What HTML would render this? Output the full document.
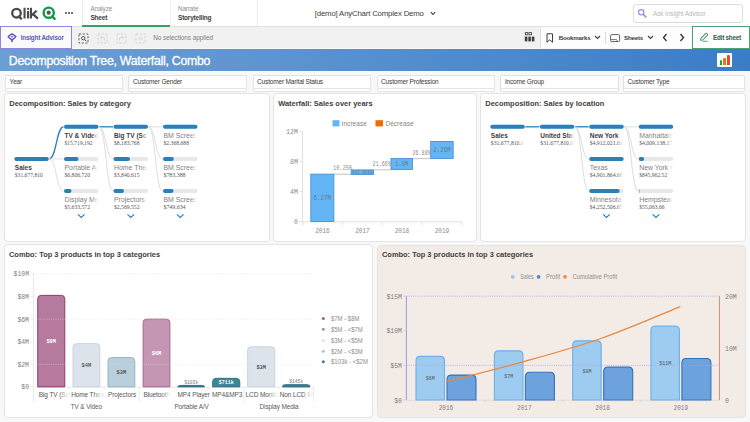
<!DOCTYPE html>
<html><head><meta charset="utf-8">
<style>
*{box-sizing:border-box;margin:0;padding:0}
html,body{width:750px;height:422px;overflow:hidden;background:#f8f8f8;font-family:"Liberation Sans",sans-serif;color:#333}
.a{position:absolute}
#top{left:0;top:0;width:750px;height:27px;background:#fff;border-bottom:1px solid #e0e0e0}
#tool{left:0;top:27px;width:750px;height:22px;background:#f1f1f1;border-bottom:1px solid #f8f8f8}
#title{left:0;top:49px;width:750px;height:22.4px;background:linear-gradient(90deg,#6b9ed5 0%,#5f95d1 33%,#3a7dc7 100%)}
.filt{top:74.5px;height:17px;background:#fff;border:1px solid #e2e2e2;border-radius:2px;font-size:6.5px;line-height:8px;color:#383838;padding:2.8px 0 0 3.6px;letter-spacing:-0.17px}.filt::after{content:"";position:absolute;left:0;right:0;top:12.5px;height:1px;background:#e6e6e6}
.panel{background:#fff;border:1px solid #e4e4e4;border-radius:4px}
.ptitle{font-size:7.45px;font-weight:bold;color:#404040;left:4px;top:5px;line-height:9px;white-space:nowrap}
</style></head><body>
<div id="top" class="a">
 <svg class="a" style="left:0;top:0" width="60" height="26" viewBox="0 0 60 26">
 <circle cx="16.5" cy="13.2" r="4.3" fill="none" stroke="#4a4a4a" stroke-width="2.3"/>
 <path d="M18.8 16.4 L21.2 18.6" stroke="#4a4a4a" stroke-width="2.2" stroke-linecap="round"/>
 <rect x="23.5" y="7.8" width="2.1" height="10.8" rx="0.3" fill="#4a4a4a"/>
 <circle cx="28.05" cy="8.9" r="1.15" fill="#4a4a4a"/>
 <rect x="27" y="11" width="2.1" height="7.6" rx="0.3" fill="#4a4a4a"/>
 <rect x="29.9" y="7.8" width="2.1" height="10.8" rx="0.3" fill="#4a4a4a"/>
 <path d="M31.6 15.3 L36.6 10.8 M33 14.1 L37.9 18.6" stroke="#4a4a4a" stroke-width="2.2"/>
 <circle cx="48.7" cy="12.7" r="5.1" fill="none" stroke="#0f9a48" stroke-width="2.4"/>
 <circle cx="48.7" cy="12.7" r="2.1" fill="#555"/>
 <path d="M52.2 16.3 L54.6 18.8" stroke="#0f9a48" stroke-width="2.4" stroke-linecap="round"/>
</svg>
 <div class="a" style="left:65px;top:12px;width:2px;height:2px;background:#404040;border-radius:1px"></div>
 <div class="a" style="left:68px;top:12px;width:2px;height:2px;background:#404040;border-radius:1px"></div>
 <div class="a" style="left:71px;top:12px;width:2px;height:2px;background:#404040;border-radius:1px"></div>
 <div class="a" style="left:82px;top:0;width:1px;height:26px;background:#ececec"></div>
 <div class="a" style="left:90.4px;top:4.5px;font-size:6.3px;color:#8c8c8c;line-height:8px;letter-spacing:-0.1px">Analyze</div>
 <div class="a" style="left:90.4px;top:13.6px;font-size:6.5px;font-weight:bold;color:#404040;line-height:8px;letter-spacing:-0.2px">Sheet</div>
 <div class="a" style="left:82px;top:25px;width:88px;height:2px;background:#3aa061"></div>
 <div class="a" style="left:178px;top:4.5px;font-size:6.3px;color:#8c8c8c;line-height:8px;letter-spacing:-0.1px">Narrate</div>
 <div class="a" style="left:178px;top:13.6px;font-size:6.5px;font-weight:bold;color:#404040;line-height:8px;letter-spacing:-0.2px">Storytelling</div>
 <div class="a" style="left:257px;top:0;width:1px;height:26px;background:#ececec"></div>
 <div class="a" style="left:169.5px;top:0;width:1px;height:25px;background:#f1f1f1"></div>
 <div class="a" style="left:314.8px;top:9px;font-size:7.8px;color:#404040;line-height:9px;letter-spacing:-0.18px">[demo] AnyChart Complex Demo</div>
 <svg class="a" style="left:430px;top:11px" width="6" height="5" viewBox="0 0 6 5"><path d="M0.8 1.2 L3 3.4 L5.2 1.2" fill="none" stroke="#404040" stroke-width="1.1"/></svg>
 <div class="a" style="left:633px;top:4px;width:110px;height:19px;border:1px solid #dcdcdc;border-radius:3px;background:#fff"></div>
 <svg class="a" style="left:636px;top:7px" width="12" height="12" viewBox="0 0 12 12"><circle cx="5.2" cy="5.3" r="2.7" fill="none" stroke="#9088dc" stroke-width="1.1"/><path d="M7.2 7.3 L9.8 9.9" stroke="#9088dc" stroke-width="1.5" stroke-linecap="round"/></svg>
 <div class="a" style="left:653px;top:9.6px;font-size:6.4px;color:#b8b8b8;line-height:8px;letter-spacing:-0.08px">Ask Insight Advisor</div>
</div>
<div id="tool" class="a">
 <div class="a" style="left:0;top:-1px;width:72px;height:22.7px;border:1px solid #8f86dc;background:#fafafa"></div>
 <svg class="a" style="left:6.5px;top:6px" width="10" height="10" viewBox="0 0 10 10"><path d="M5 0.9 Q7.6 2.2 8.9 3.7 Q7.6 5.4 5 6.9 Q2.4 5.4 1.1 3.7 Q2.4 2.2 5 0.9 Z" fill="none" stroke="#5548c8" stroke-width="1.35" stroke-linejoin="round"/><path d="M5 2.6 L6.1 3.7 L5 4.8 L3.9 3.7 Z" fill="#5548c8"/><path d="M5 7 L5 8.4" stroke="#5548c8" stroke-width="1.5" stroke-linecap="round"/></svg>
 <div class="a" style="left:20.7px;top:6px;font-size:6.3px;font-weight:bold;color:#5b5bb8;line-height:9px;letter-spacing:-0.17px">Insight Advisor</div>
 <svg class="a" style="left:78px;top:5.5px" width="11" height="11" viewBox="0 0 11 11"><rect x="1" y="1" width="9" height="9" fill="none" stroke="#555" stroke-width="0.9" stroke-dasharray="2.2 1.5"/><circle cx="5.3" cy="5.2" r="1.7" fill="none" stroke="#404040" stroke-width="0.9"/><path d="M6.5 6.4 L8.2 8.1" stroke="#404040" stroke-width="1"/></svg>
 <svg class="a" style="left:97px;top:5.5px" width="11" height="11" viewBox="0 0 11 11"><rect x="1" y="1" width="9" height="9" fill="none" stroke="#cfcfcf" stroke-width="0.9" stroke-dasharray="2.2 1.5"/><path d="M3.5 4.5 L5 3 M3.5 4.5 L5 6 M3.5 4.5 H6.5 Q7.5 4.5 7.5 6 V7.5" fill="none" stroke="#cfcfcf" stroke-width="0.8"/></svg>
 <svg class="a" style="left:116px;top:5.5px" width="11" height="11" viewBox="0 0 11 11"><rect x="1" y="1" width="9" height="9" fill="none" stroke="#cfcfcf" stroke-width="0.9" stroke-dasharray="2.2 1.5"/><path d="M7.5 4.5 L6 3 M7.5 4.5 L6 6 M7.5 4.5 H4.5 Q3.5 4.5 3.5 6 V7.5" fill="none" stroke="#cfcfcf" stroke-width="0.8"/></svg>
 <svg class="a" style="left:135px;top:5.5px" width="11" height="11" viewBox="0 0 11 11"><rect x="1" y="1" width="9" height="9" fill="none" stroke="#cfcfcf" stroke-width="0.9" stroke-dasharray="2.2 1.5"/><circle cx="5.5" cy="5.5" r="1.5" fill="none" stroke="#cfcfcf" stroke-width="0.8"/></svg>
 <div class="a" style="left:153.3px;top:6px;font-size:6.4px;color:#808080;line-height:9px;letter-spacing:-0.05px">No selections applied</div>
 <div class="a" style="left:540px;top:0;width:1px;height:21px;background:#e0e0e0"></div>
 <div class="a" style="left:541px;top:0;width:151px;height:21px;background:#fdfdfd"></div>
 <svg class="a" style="left:524px;top:5px" width="11" height="11" viewBox="0 0 11 11"><rect x="1.3" y="0.6" width="2.6" height="2.2" fill="none" stroke="#404040" stroke-width="0.8"/><rect x="5" y="0.6" width="2.6" height="2.2" fill="none" stroke="#404040" stroke-width="0.8"/><rect x="0.8" y="4.6" width="2.6" height="4.8" fill="#404040"/><rect x="4.3" y="4.6" width="2.6" height="4.8" fill="#404040"/><rect x="7.8" y="4.6" width="2.6" height="4.8" fill="#404040"/></svg>
 <svg class="a" style="left:546px;top:6px" width="8" height="10" viewBox="0 0 8 10"><path d="M1 0.8 H6.5 V9.3 L3.75 6.8 L1 9.3 Z" fill="none" stroke="#404040" stroke-width="1"/></svg>
 <div class="a" style="left:558.7px;top:5.8px;font-size:6.2px;font-weight:bold;color:#404040;line-height:9px;letter-spacing:-0.22px">Bookmarks</div>
 <svg class="a" style="left:594px;top:8px" width="7" height="5" viewBox="0 0 7 5"><path d="M1 1 L3.5 3.5 L6 1" fill="none" stroke="#404040" stroke-width="1.1"/></svg>
 <div class="a" style="left:605px;top:5px;width:1px;height:12px;background:#ddd"></div>
 <svg class="a" style="left:609.5px;top:6.5px" width="11" height="9" viewBox="0 0 11 9"><rect x="0.6" y="0.6" width="9" height="7" rx="1.2" fill="none" stroke="#505050" stroke-width="0.9"/><path d="M0.8 5.6 H6.5 L7.6 7.5" fill="none" stroke="#505050" stroke-width="0.8"/></svg>
 <div class="a" style="left:624px;top:5.8px;font-size:6.2px;font-weight:bold;color:#404040;line-height:9px;letter-spacing:-0.2px">Sheets</div>
 <svg class="a" style="left:647px;top:8px" width="7" height="5" viewBox="0 0 7 5"><path d="M1 1 L3.5 3.5 L6 1" fill="none" stroke="#404040" stroke-width="1.1"/></svg>
 <svg class="a" style="left:662px;top:6px" width="6" height="9" viewBox="0 0 6 9"><path d="M4.5 1 L1.5 4.5 L4.5 8" fill="none" stroke="#333" stroke-width="1.3"/></svg>
 <svg class="a" style="left:679px;top:6px" width="6" height="9" viewBox="0 0 6 9"><path d="M1.5 1 L4.5 4.5 L1.5 8" fill="none" stroke="#333" stroke-width="1.3"/></svg>
 <div class="a" style="left:692px;top:-1px;width:58px;height:23px;border:1px solid #4aa36f;background:#fff"></div>
 <svg class="a" style="left:699px;top:5px" width="10" height="10" viewBox="0 0 10 10"><path d="M1.6 8.2 L2 6.2 L6.6 1.6 Q7.3 1 8 1.7 L8.3 2 Q9 2.7 8.4 3.4 L3.8 8 Z" fill="none" stroke="#3a9a66" stroke-width="1.05" stroke-linejoin="round"/><path d="M3.8 9.3 H8.5" stroke="#3a9a66" stroke-width="0.9"/></svg>
 <div class="a" style="left:713px;top:5.8px;font-size:6.3px;font-weight:bold;color:#2e5d4c;line-height:9px;letter-spacing:-0.22px">Edit sheet</div>
</div>
<div id="title" class="a">
 <div class="a" style="left:8.8px;top:4.6px;font-size:12.3px;color:#fff;line-height:14px;letter-spacing:-0.26px;-webkit-text-stroke:0.3px #fff">Decomposition Tree, Waterfall, Combo</div>
 <div class="a" style="left:717.4px;top:3.5px;width:14.8px;height:14.8px;background:#fff;border-radius:1px"></div>
 <div class="a" style="left:719.7px;top:11.2px;width:2.5px;height:4.6px;background:#1c9c45;border-radius:1px 1px 0 0"></div>
 <div class="a" style="left:723.4px;top:8.9px;width:2.5px;height:6.9px;background:#ef7414;border-radius:1px 1px 0 0"></div>
 <div class="a" style="left:727.3px;top:5.8px;width:2.6px;height:10px;background:#ee4a22;border-radius:1px 1px 0 0"></div>
</div>

<div class="a filt" style="left:5px;width:118px">Year</div>
<div class="a filt" style="left:128.4px;width:118.4px">Customer Gender</div>
<div class="a filt" style="left:252.5px;width:118.5px">Customer Marital Status</div>
<div class="a filt" style="left:376.5px;width:118.5px">Customer Profession</div>
<div class="a filt" style="left:500.3px;width:118.5px">Income Group</div>
<div class="a filt" style="left:623px;width:122px">Customer Type</div>

<div class="a panel" style="left:4.3px;top:93px;width:265.5px;height:148.5px"><div class="a ptitle">Decomposition: Sales by category</div></div>
<svg class="a" style="left:4px;top:94px" width="266" height="148" viewBox="4 94 266 148"><!--P1--><defs><linearGradient id="fade"><stop offset="0" stop-color="#fff" stop-opacity="0"/><stop offset="0.85" stop-color="#fff" stop-opacity="1"/></linearGradient>
<clipPath id="p1c0"><rect x="14.3" y="100" width="34.5" height="120"/></clipPath>
<clipPath id="p1c1"><rect x="64.0" y="100" width="34.5" height="120"/></clipPath>
<clipPath id="p1c2"><rect x="113.5" y="100" width="34.5" height="120"/></clipPath>
<clipPath id="p1c3"><rect x="163.0" y="100" width="34.5" height="120"/></clipPath>
</defs>
<path d="M49.3 158.9 C56.4 158.9 56.4 126.8 63.5 126.8" fill="none" stroke="#2a81b8" stroke-width="1.3"/>
<path d="M49.3 158.9 C56.4 158.9 56.4 158.9 63.5 158.9" fill="none" stroke="#d4d4d4" stroke-width="0.8"/>
<path d="M49.3 158.9 C56.4 158.9 56.4 191.0 63.5 191.0" fill="none" stroke="#d4d4d4" stroke-width="0.8"/>
<path d="M99.0 126.8 C106.0 126.8 106.0 126.8 113.0 126.8" fill="none" stroke="#2a81b8" stroke-width="1.3"/>
<path d="M99.0 126.8 C106.0 126.8 106.0 158.9 113.0 158.9" fill="none" stroke="#d4d4d4" stroke-width="0.8"/>
<path d="M99.0 126.8 C106.0 126.8 106.0 191.0 113.0 191.0" fill="none" stroke="#d4d4d4" stroke-width="0.8"/>
<path d="M148.5 126.8 C155.5 126.8 155.5 126.8 162.5 126.8" fill="none" stroke="#d4d4d4" stroke-width="0.8"/>
<path d="M148.5 126.8 C155.5 126.8 155.5 158.9 162.5 158.9" fill="none" stroke="#d4d4d4" stroke-width="0.8"/>
<path d="M148.5 126.8 C155.5 126.8 155.5 191.0 162.5 191.0" fill="none" stroke="#d4d4d4" stroke-width="0.8"/>
<line x1="16.3" y1="158.9" x2="46.8" y2="158.9" stroke="#e8e8e8" stroke-width="4" stroke-linecap="round"/><line x1="16.3" y1="158.9" x2="46.8" y2="158.9" stroke="#2a81b8" stroke-width="4" stroke-linecap="round"/>
<g clip-path="url(#p1c0)"><text x="14.8" y="169.8" font-family="Liberation Sans" font-weight="bold" font-size="6.5" fill="#404040">Sales</text><text x="14.8" y="176.8" font-family="Liberation Serif" font-size="6" fill="#555" textLength="28" lengthAdjust="spacingAndGlyphs">$31,677,810</text></g><rect x="41.8" y="163.9" width="8" height="15" fill="url(#fade)"/>
<line x1="66.0" y1="126.8" x2="96.5" y2="126.8" stroke="#e8e8e8" stroke-width="4" stroke-linecap="round"/><line x1="66.0" y1="126.8" x2="96.5" y2="126.8" stroke="#2a81b8" stroke-width="4" stroke-linecap="round"/>
<g clip-path="url(#p1c1)"><text x="64.5" y="137.7" font-family="Liberation Sans" font-weight="bold" font-size="6.5" fill="#404040">TV &amp; Video</text><text x="64.5" y="144.7" font-family="Liberation Serif" font-size="6" fill="#555" textLength="28" lengthAdjust="spacingAndGlyphs">$15,719,192</text></g><rect x="91.5" y="131.8" width="8" height="15" fill="url(#fade)"/>
<line x1="66.0" y1="158.9" x2="96.5" y2="158.9" stroke="#e8e8e8" stroke-width="4" stroke-linecap="round"/><line x1="66.0" y1="158.9" x2="76.5" y2="158.9" stroke="#2a81b8" stroke-width="4" stroke-linecap="round"/>
<g clip-path="url(#p1c1)"><text x="64.5" y="169.8" font-family="Liberation Sans" font-size="6.9" fill="#7f7f7f">Portable A/V</text><text x="64.5" y="176.8" font-family="Liberation Serif" font-size="6" fill="#555" textLength="25.5" lengthAdjust="spacingAndGlyphs">$6,806,720</text></g><rect x="91.5" y="163.9" width="8" height="15" fill="url(#fade)"/>
<line x1="66.0" y1="191.0" x2="96.5" y2="191.0" stroke="#e8e8e8" stroke-width="4" stroke-linecap="round"/><line x1="66.0" y1="191.0" x2="69.5" y2="191.0" stroke="#2a81b8" stroke-width="4" stroke-linecap="round"/>
<g clip-path="url(#p1c1)"><text x="64.5" y="201.9" font-family="Liberation Sans" font-size="6.9" fill="#7f7f7f">Display Media</text><text x="64.5" y="208.9" font-family="Liberation Serif" font-size="6" fill="#555" textLength="25.5" lengthAdjust="spacingAndGlyphs">$5,633,572</text></g><rect x="91.5" y="196.0" width="8" height="15" fill="url(#fade)"/>
<line x1="115.5" y1="126.8" x2="146.0" y2="126.8" stroke="#e8e8e8" stroke-width="4" stroke-linecap="round"/><line x1="115.5" y1="126.8" x2="146.0" y2="126.8" stroke="#2a81b8" stroke-width="4" stroke-linecap="round"/>
<g clip-path="url(#p1c2)"><text x="114.0" y="137.7" font-family="Liberation Sans" font-weight="bold" font-size="6.5" fill="#404040">Big TV (Screen)</text><text x="114.0" y="144.7" font-family="Liberation Serif" font-size="6" fill="#555" textLength="25.5" lengthAdjust="spacingAndGlyphs">$8,183,768</text></g><rect x="141.0" y="131.8" width="8" height="15" fill="url(#fade)"/>
<line x1="115.5" y1="158.9" x2="146.0" y2="158.9" stroke="#e8e8e8" stroke-width="4" stroke-linecap="round"/><line x1="115.5" y1="158.9" x2="128.0" y2="158.9" stroke="#2a81b8" stroke-width="4" stroke-linecap="round"/>
<g clip-path="url(#p1c2)"><text x="114.0" y="169.8" font-family="Liberation Sans" font-size="6.9" fill="#7f7f7f">Home Theater</text><text x="114.0" y="176.8" font-family="Liberation Serif" font-size="6" fill="#555" textLength="25.5" lengthAdjust="spacingAndGlyphs">$3,840,615</text></g><rect x="141.0" y="163.9" width="8" height="15" fill="url(#fade)"/>
<line x1="115.5" y1="191.0" x2="146.0" y2="191.0" stroke="#e8e8e8" stroke-width="4" stroke-linecap="round"/><line x1="115.5" y1="191.0" x2="122.0" y2="191.0" stroke="#2a81b8" stroke-width="4" stroke-linecap="round"/>
<g clip-path="url(#p1c2)"><text x="114.0" y="201.9" font-family="Liberation Sans" font-size="6.9" fill="#7f7f7f">Projectors</text><text x="114.0" y="208.9" font-family="Liberation Serif" font-size="6" fill="#555" textLength="25.5" lengthAdjust="spacingAndGlyphs">$2,569,552</text></g><rect x="141.0" y="196.0" width="8" height="15" fill="url(#fade)"/>
<line x1="165.0" y1="126.8" x2="195.5" y2="126.8" stroke="#e8e8e8" stroke-width="4" stroke-linecap="round"/><line x1="165.0" y1="126.8" x2="195.5" y2="126.8" stroke="#2a81b8" stroke-width="4" stroke-linecap="round"/>
<g clip-path="url(#p1c3)"><text x="163.5" y="137.7" font-family="Liberation Sans" font-size="6.9" fill="#7f7f7f">BM Screen</text><text x="163.5" y="144.7" font-family="Liberation Serif" font-size="6" fill="#555" textLength="25.5" lengthAdjust="spacingAndGlyphs">$2,368,688</text></g><rect x="190.5" y="131.8" width="8" height="15" fill="url(#fade)"/>
<line x1="165.0" y1="158.9" x2="195.5" y2="158.9" stroke="#e8e8e8" stroke-width="4" stroke-linecap="round"/><line x1="165.0" y1="158.9" x2="171.8" y2="158.9" stroke="#2a81b8" stroke-width="4" stroke-linecap="round"/>
<g clip-path="url(#p1c3)"><text x="163.5" y="169.8" font-family="Liberation Sans" font-size="6.9" fill="#7f7f7f">BM Screen</text><text x="163.5" y="176.8" font-family="Liberation Serif" font-size="6" fill="#555" textLength="22" lengthAdjust="spacingAndGlyphs">$783,388</text></g><rect x="190.5" y="163.9" width="8" height="15" fill="url(#fade)"/>
<line x1="165.0" y1="191.0" x2="195.5" y2="191.0" stroke="#e8e8e8" stroke-width="4" stroke-linecap="round"/><line x1="165.0" y1="191.0" x2="171.5" y2="191.0" stroke="#2a81b8" stroke-width="4" stroke-linecap="round"/>
<g clip-path="url(#p1c3)"><text x="163.5" y="201.9" font-family="Liberation Sans" font-size="6.9" fill="#7f7f7f">BM Screen</text><text x="163.5" y="208.9" font-family="Liberation Serif" font-size="6" fill="#555" textLength="22" lengthAdjust="spacingAndGlyphs">$749,634</text></g><rect x="190.5" y="196.0" width="8" height="15" fill="url(#fade)"/>
<path d="M77.95 214.4 L81.25 217.5 L84.55 214.4" fill="none" stroke="#2a81b8" stroke-width="1.2"/>
<path d="M127.45 214.4 L130.75 217.5 L134.05 214.4" fill="none" stroke="#2a81b8" stroke-width="1.2"/>
<path d="M176.95 214.4 L180.25 217.5 L183.55 214.4" fill="none" stroke="#2a81b8" stroke-width="1.2"/><!--/P1--></svg>
<div class="a panel" style="left:273.2px;top:93px;width:203.5px;height:148.5px"><div class="a ptitle">Waterfall: Sales over years</div></div>
<svg class="a" style="left:273px;top:94px" width="204" height="148" viewBox="273 94 204 148"><!--P2--><rect x="332.5" y="120.2" width="7" height="6.2" fill="#64b5f6"/>
<text x="341.6" y="125.9" font-family="Liberation Sans" font-size="6.6" fill="#888">Increase</text>
<rect x="375.5" y="120.2" width="7.5" height="6.2" fill="#ef6c00"/>
<text x="385.4" y="125.9" font-family="Liberation Sans" font-size="6.6" fill="#888">Decrease</text>
<line x1="302.5" y1="131" x2="302.5" y2="221.5" stroke="#d9d9d9" stroke-width="0.8"/>
<line x1="299.5" y1="131.6" x2="302.5" y2="131.6" stroke="#d9d9d9" stroke-width="0.8"/>
<text x="297.9" y="134.0" font-family="Liberation Mono" font-size="7.2" fill="#8c8c8c" text-anchor="end" textLength="11.850000000000001" lengthAdjust="spacingAndGlyphs">12M</text>
<line x1="299.5" y1="161.5" x2="302.5" y2="161.5" stroke="#d9d9d9" stroke-width="0.8"/>
<text x="297.9" y="163.9" font-family="Liberation Mono" font-size="7.2" fill="#8c8c8c" text-anchor="end" textLength="7.9" lengthAdjust="spacingAndGlyphs">8M</text>
<line x1="299.5" y1="191.5" x2="302.5" y2="191.5" stroke="#d9d9d9" stroke-width="0.8"/>
<text x="297.9" y="193.9" font-family="Liberation Mono" font-size="7.2" fill="#8c8c8c" text-anchor="end" textLength="7.9" lengthAdjust="spacingAndGlyphs">4M</text>
<line x1="299.5" y1="221.5" x2="302.5" y2="221.5" stroke="#d9d9d9" stroke-width="0.8"/>
<text x="297.9" y="223.9" font-family="Liberation Mono" font-size="7.2" fill="#8c8c8c" text-anchor="end" textLength="3.95" lengthAdjust="spacingAndGlyphs">0</text>
<line x1="302.5" y1="221.8" x2="462" y2="221.8" stroke="#d9d9d9" stroke-width="0.8"/>
<line x1="303" y1="221.8" x2="303" y2="225" stroke="#d9d9d9" stroke-width="0.8"/>
<line x1="342.6" y1="221.8" x2="342.6" y2="225" stroke="#d9d9d9" stroke-width="0.8"/>
<line x1="382" y1="221.8" x2="382" y2="225" stroke="#d9d9d9" stroke-width="0.8"/>
<line x1="421.8" y1="221.8" x2="421.8" y2="225" stroke="#d9d9d9" stroke-width="0.8"/>
<line x1="461.8" y1="221.8" x2="461.8" y2="225" stroke="#d9d9d9" stroke-width="0.8"/>
<text x="322.4" y="233.4" font-family="Liberation Mono" font-size="7.2" fill="#8c8c8c" text-anchor="middle" textLength="14.5" lengthAdjust="spacingAndGlyphs">2016</text>
<text x="362.4" y="233.4" font-family="Liberation Mono" font-size="7.2" fill="#8c8c8c" text-anchor="middle" textLength="14.5" lengthAdjust="spacingAndGlyphs">2017</text>
<text x="402" y="233.4" font-family="Liberation Mono" font-size="7.2" fill="#8c8c8c" text-anchor="middle" textLength="14.5" lengthAdjust="spacingAndGlyphs">2018</text>
<text x="442" y="233.4" font-family="Liberation Mono" font-size="7.2" fill="#8c8c8c" text-anchor="middle" textLength="14.5" lengthAdjust="spacingAndGlyphs">2019</text>
<line x1="333.9" y1="174.2" x2="351.1" y2="174.2" stroke="#c9c9c9" stroke-width="1.1"/>
<line x1="373.6" y1="169.8" x2="391" y2="169.8" stroke="#c9c9c9" stroke-width="1.1"/>
<line x1="412.5" y1="158.6" x2="430.7" y2="158.6" stroke="#c9c9c9" stroke-width="1.1"/>
<rect x="310.8" y="174.1" width="23.10" height="47.40" fill="#64b5f6" stroke="#3f8ad6" stroke-width="0.8"/>
<rect x="351.1" y="169.9" width="22.50" height="4.70" fill="#64b5f6" stroke="#3f8ad6" stroke-width="0.8"/>
<rect x="391" y="158.4" width="21.50" height="11.20" fill="#64b5f6" stroke="#3f8ad6" stroke-width="0.8"/>
<rect x="430.7" y="141.4" width="22.50" height="17.10" fill="#64b5f6" stroke="#3f8ad6" stroke-width="0.8"/>
<text x="322.3" y="200.3" font-family="Liberation Mono" font-size="7" fill="#6a7a88" text-anchor="middle" textLength="17.5" lengthAdjust="spacingAndGlyphs">6.27M</text>
<text x="362.4" y="174.2" font-family="Liberation Mono" font-size="5" fill="#6a7a88" text-anchor="middle" textLength="21" lengthAdjust="spacingAndGlyphs">642.866k</text>
<text x="401.8" y="166.2" font-family="Liberation Mono" font-size="7" fill="#6a7a88" text-anchor="middle" textLength="13" lengthAdjust="spacingAndGlyphs">1.5M</text>
<text x="442" y="152" font-family="Liberation Mono" font-size="7" fill="#6a7a88" text-anchor="middle" textLength="17.5" lengthAdjust="spacingAndGlyphs">2.26M</text>
<text x="333" y="170.4" font-family="Liberation Mono" font-size="7" fill="#8c8c8c" textLength="19.0" lengthAdjust="spacingAndGlyphs">10.25%</text>
<text x="372.6" y="165.8" font-family="Liberation Mono" font-size="7" fill="#8c8c8c" textLength="18.4" lengthAdjust="spacingAndGlyphs">21.66%</text>
<text x="412.5" y="154.6" font-family="Liberation Mono" font-size="7" fill="#8c8c8c" textLength="18.2" lengthAdjust="spacingAndGlyphs">26.88%</text><!--/P2--></svg>
<div class="a panel" style="left:480.3px;top:93px;width:265.7px;height:148.5px"><div class="a ptitle">Decomposition: Sales by location</div></div>
<svg class="a" style="left:480px;top:94px" width="266" height="148" viewBox="480 94 266 148"><!--P3--><defs><linearGradient id="fade"><stop offset="0" stop-color="#fff" stop-opacity="0"/><stop offset="0.85" stop-color="#fff" stop-opacity="1"/></linearGradient>
<clipPath id="p3c0"><rect x="490.3" y="100" width="34.5" height="120"/></clipPath>
<clipPath id="p3c1"><rect x="539.8" y="100" width="34.5" height="120"/></clipPath>
<clipPath id="p3c2"><rect x="589.2" y="100" width="34.5" height="120"/></clipPath>
<clipPath id="p3c3"><rect x="638.7" y="100" width="34.5" height="120"/></clipPath>
</defs>
<path d="M525.3 126.8 C532.3 126.8 532.3 126.8 539.3 126.8" fill="none" stroke="#2a81b8" stroke-width="1.3"/>
<path d="M574.8 126.8 C581.75 126.8 581.75 126.8 588.7 126.8" fill="none" stroke="#2a81b8" stroke-width="1.3"/>
<path d="M574.8 126.8 C581.75 126.8 581.75 158.9 588.7 158.9" fill="none" stroke="#d4d4d4" stroke-width="0.8"/>
<path d="M574.8 126.8 C581.75 126.8 581.75 191.0 588.7 191.0" fill="none" stroke="#d4d4d4" stroke-width="0.8"/>
<path d="M624.2 126.8 C631.2 126.8 631.2 126.8 638.2 126.8" fill="none" stroke="#d4d4d4" stroke-width="0.8"/>
<path d="M624.2 126.8 C631.2 126.8 631.2 158.9 638.2 158.9" fill="none" stroke="#d4d4d4" stroke-width="0.8"/>
<path d="M624.2 126.8 C631.2 126.8 631.2 191.0 638.2 191.0" fill="none" stroke="#d4d4d4" stroke-width="0.8"/>
<line x1="492.3" y1="126.8" x2="522.8" y2="126.8" stroke="#e8e8e8" stroke-width="4" stroke-linecap="round"/><line x1="492.3" y1="126.8" x2="522.8" y2="126.8" stroke="#2a81b8" stroke-width="4" stroke-linecap="round"/>
<g clip-path="url(#p3c0)"><text x="490.8" y="137.7" font-family="Liberation Sans" font-weight="bold" font-size="6.5" fill="#404040">Sales</text><text x="490.8" y="144.7" font-family="Liberation Serif" font-size="6" fill="#555" textLength="33" lengthAdjust="spacingAndGlyphs">$31,677,810.0</text></g><rect x="517.8" y="131.8" width="8" height="15" fill="url(#fade)"/>
<line x1="541.8" y1="126.8" x2="572.3" y2="126.8" stroke="#e8e8e8" stroke-width="4" stroke-linecap="round"/><line x1="541.8" y1="126.8" x2="572.3" y2="126.8" stroke="#2a81b8" stroke-width="4" stroke-linecap="round"/>
<g clip-path="url(#p3c1)"><text x="540.3" y="137.7" font-family="Liberation Sans" font-weight="bold" font-size="6.5" fill="#404040">United States</text><text x="540.3" y="144.7" font-family="Liberation Serif" font-size="6" fill="#555" textLength="33" lengthAdjust="spacingAndGlyphs">$31,677,810.0</text></g><rect x="567.3" y="131.8" width="8" height="15" fill="url(#fade)"/>
<line x1="591.2" y1="126.8" x2="621.7" y2="126.8" stroke="#e8e8e8" stroke-width="4" stroke-linecap="round"/><line x1="591.2" y1="126.8" x2="621.7" y2="126.8" stroke="#2a81b8" stroke-width="4" stroke-linecap="round"/>
<g clip-path="url(#p3c2)"><text x="589.7" y="137.7" font-family="Liberation Sans" font-weight="bold" font-size="6.5" fill="#404040">New York</text><text x="589.7" y="144.7" font-family="Liberation Serif" font-size="6" fill="#555" textLength="33" lengthAdjust="spacingAndGlyphs">$4,912,021.01</text></g><rect x="616.7" y="131.8" width="8" height="15" fill="url(#fade)"/>
<line x1="591.2" y1="158.9" x2="621.7" y2="158.9" stroke="#e8e8e8" stroke-width="4" stroke-linecap="round"/><line x1="591.2" y1="158.9" x2="621.7" y2="158.9" stroke="#2a81b8" stroke-width="4" stroke-linecap="round"/>
<g clip-path="url(#p3c2)"><text x="589.7" y="169.8" font-family="Liberation Sans" font-size="6.9" fill="#7f7f7f">Texas</text><text x="589.7" y="176.8" font-family="Liberation Serif" font-size="6" fill="#555" textLength="33" lengthAdjust="spacingAndGlyphs">$4,901,864.66</text></g><rect x="616.7" y="163.9" width="8" height="15" fill="url(#fade)"/>
<line x1="591.2" y1="191.0" x2="621.7" y2="191.0" stroke="#e8e8e8" stroke-width="4" stroke-linecap="round"/><line x1="591.2" y1="191.0" x2="617.7" y2="191.0" stroke="#2a81b8" stroke-width="4" stroke-linecap="round"/>
<g clip-path="url(#p3c2)"><text x="589.7" y="201.9" font-family="Liberation Sans" font-size="6.9" fill="#7f7f7f">Minnesota</text><text x="589.7" y="208.9" font-family="Liberation Serif" font-size="6" fill="#555" textLength="33" lengthAdjust="spacingAndGlyphs">$4,252,506.67</text></g><rect x="616.7" y="196.0" width="8" height="15" fill="url(#fade)"/>
<line x1="640.7" y1="126.8" x2="671.2" y2="126.8" stroke="#e8e8e8" stroke-width="4" stroke-linecap="round"/><line x1="640.7" y1="126.8" x2="671.2" y2="126.8" stroke="#2a81b8" stroke-width="4" stroke-linecap="round"/>
<g clip-path="url(#p3c3)"><text x="639.2" y="137.7" font-family="Liberation Sans" font-size="6.9" fill="#7f7f7f">Manhattan</text><text x="639.2" y="144.7" font-family="Liberation Serif" font-size="6" fill="#555" textLength="33" lengthAdjust="spacingAndGlyphs">$4,009,138.17</text></g><rect x="666.2" y="131.8" width="8" height="15" fill="url(#fade)"/>
<line x1="640.7" y1="158.9" x2="671.2" y2="158.9" stroke="#e8e8e8" stroke-width="4" stroke-linecap="round"/><line x1="640.7" y1="158.9" x2="642.2" y2="158.9" stroke="#2a81b8" stroke-width="4" stroke-linecap="round"/>
<g clip-path="url(#p3c3)"><text x="639.2" y="169.8" font-family="Liberation Sans" font-size="6.9" fill="#7f7f7f">New York City</text><text x="639.2" y="176.8" font-family="Liberation Serif" font-size="6" fill="#555" textLength="28" lengthAdjust="spacingAndGlyphs">$845,962.52</text></g><rect x="666.2" y="163.9" width="8" height="15" fill="url(#fade)"/>
<line x1="640.7" y1="191.0" x2="671.2" y2="191.0" stroke="#e8e8e8" stroke-width="4" stroke-linecap="round"/><rect x="638.7" y="189.0" width="1.2" height="4" fill="#9cc4de"/>
<g clip-path="url(#p3c3)"><text x="639.2" y="201.9" font-family="Liberation Sans" font-size="6.9" fill="#7f7f7f">Hempstead</text><text x="639.2" y="208.9" font-family="Liberation Serif" font-size="6" fill="#555" textLength="25.5" lengthAdjust="spacingAndGlyphs">$55,063.66</text></g><rect x="666.2" y="196.0" width="8" height="15" fill="url(#fade)"/>
<path d="M603.1500000000001 214.4 L606.45 217.5 L609.75 214.4" fill="none" stroke="#2a81b8" stroke-width="1.2"/>
<path d="M652.6500000000001 214.4 L655.95 217.5 L659.25 214.4" fill="none" stroke="#2a81b8" stroke-width="1.2"/><!--/P3--></svg>
<div class="a panel" style="left:4px;top:244.3px;width:369px;height:174px"><div class="a ptitle">Combo: Top 3 products in top 3 categories</div></div>
<svg class="a" style="left:4px;top:245px" width="370" height="173" viewBox="4 245 370 173"><!--P4--><defs>
<clipPath id="xl0"><rect x="36.5" y="388" width="33.5" height="12"/></clipPath>
<linearGradient id="fg0" x1="36.5" x2="70" gradientUnits="userSpaceOnUse"><stop offset="0.68" stop-color="#5a5a5a"/><stop offset="0.92" stop-color="#e8e8e8"/></linearGradient>
<clipPath id="xl1"><rect x="70" y="388" width="34" height="12"/></clipPath>
<linearGradient id="fg1" x1="70" x2="104" gradientUnits="userSpaceOnUse"><stop offset="0.68" stop-color="#5a5a5a"/><stop offset="0.92" stop-color="#e8e8e8"/></linearGradient>
<clipPath id="xl2"><rect x="104.5" y="388" width="34.5" height="12"/></clipPath>
<linearGradient id="fg2" x1="104.5" x2="139" gradientUnits="userSpaceOnUse"><stop offset="0.68" stop-color="#5a5a5a"/><stop offset="0.92" stop-color="#e8e8e8"/></linearGradient>
<clipPath id="xl3"><rect x="139.5" y="388" width="32.0" height="12"/></clipPath>
<linearGradient id="fg3" x1="139.5" x2="171.5" gradientUnits="userSpaceOnUse"><stop offset="0.68" stop-color="#5a5a5a"/><stop offset="0.92" stop-color="#e8e8e8"/></linearGradient>
<clipPath id="xl4"><rect x="174" y="388" width="36.5" height="12"/></clipPath>
<linearGradient id="fg4" x1="174" x2="210.5" gradientUnits="userSpaceOnUse"><stop offset="0.68" stop-color="#5a5a5a"/><stop offset="0.92" stop-color="#e8e8e8"/></linearGradient>
<clipPath id="xl5"><rect x="209" y="388" width="35.5" height="12"/></clipPath>
<linearGradient id="fg5" x1="209" x2="244.5" gradientUnits="userSpaceOnUse"><stop offset="0.68" stop-color="#5a5a5a"/><stop offset="0.92" stop-color="#e8e8e8"/></linearGradient>
<clipPath id="xl6"><rect x="244" y="388" width="34.5" height="12"/></clipPath>
<linearGradient id="fg6" x1="244" x2="278.5" gradientUnits="userSpaceOnUse"><stop offset="0.68" stop-color="#5a5a5a"/><stop offset="0.92" stop-color="#e8e8e8"/></linearGradient>
<clipPath id="xl7"><rect x="279" y="388" width="34.5" height="12"/></clipPath>
<linearGradient id="fg7" x1="279" x2="313.5" gradientUnits="userSpaceOnUse"><stop offset="0.68" stop-color="#5a5a5a"/><stop offset="0.92" stop-color="#e8e8e8"/></linearGradient>
</defs>
<text x="29" y="276.4" font-family="Liberation Mono" font-size="7.4" fill="#828282" text-anchor="end" textLength="15.4" lengthAdjust="spacingAndGlyphs">$10M</text>
<line x1="30.2" y1="273.9" x2="33.5" y2="273.9" stroke="#e3e3e3" stroke-width="0.7"/>
<text x="29" y="299.0" font-family="Liberation Mono" font-size="7.4" fill="#828282" text-anchor="end" textLength="11.6" lengthAdjust="spacingAndGlyphs">$8M</text>
<line x1="30.2" y1="296.5" x2="33.5" y2="296.5" stroke="#e3e3e3" stroke-width="0.7"/>
<text x="29" y="321.6" font-family="Liberation Mono" font-size="7.4" fill="#828282" text-anchor="end" textLength="11.6" lengthAdjust="spacingAndGlyphs">$6M</text>
<line x1="30.2" y1="319.1" x2="33.5" y2="319.1" stroke="#e3e3e3" stroke-width="0.7"/>
<text x="29" y="344.2" font-family="Liberation Mono" font-size="7.4" fill="#828282" text-anchor="end" textLength="11.6" lengthAdjust="spacingAndGlyphs">$4M</text>
<line x1="30.2" y1="341.7" x2="33.5" y2="341.7" stroke="#e3e3e3" stroke-width="0.7"/>
<text x="29" y="366.8" font-family="Liberation Mono" font-size="7.4" fill="#828282" text-anchor="end" textLength="11.6" lengthAdjust="spacingAndGlyphs">$2M</text>
<line x1="30.2" y1="364.3" x2="33.5" y2="364.3" stroke="#e3e3e3" stroke-width="0.7"/>
<text x="29" y="389.4" font-family="Liberation Mono" font-size="7.4" fill="#828282" text-anchor="end" textLength="7.7" lengthAdjust="spacingAndGlyphs">$0</text>
<line x1="30.2" y1="386.9" x2="33.5" y2="386.9" stroke="#e3e3e3" stroke-width="0.7"/>
<line x1="33.5" y1="274" x2="33.5" y2="401.5" stroke="#e3e3e3" stroke-width="0.8"/>
<line x1="33.5" y1="387.2" x2="314" y2="387.2" stroke="#e3e3e3" stroke-width="0.7"/>
<line x1="139.2" y1="386.9" x2="139.2" y2="401.5" stroke="#e3e3e3" stroke-width="0.8"/>
<line x1="243.8" y1="386.9" x2="243.8" y2="401.5" stroke="#e3e3e3" stroke-width="0.8"/>
<line x1="69.5" y1="386.9" x2="69.5" y2="388.9" stroke="#e3e3e3" stroke-width="0.7"/>
<line x1="104.2" y1="386.9" x2="104.2" y2="388.9" stroke="#e3e3e3" stroke-width="0.7"/>
<line x1="174" y1="386.9" x2="174" y2="388.9" stroke="#e3e3e3" stroke-width="0.7"/>
<line x1="208.8" y1="386.9" x2="208.8" y2="388.9" stroke="#e3e3e3" stroke-width="0.7"/>
<line x1="278.3" y1="386.9" x2="278.3" y2="388.9" stroke="#e3e3e3" stroke-width="0.7"/>
<line x1="313.6" y1="386.9" x2="313.6" y2="388.9" stroke="#e3e3e3" stroke-width="0.7"/>
<line x1="313.6" y1="386.9" x2="313.6" y2="401.5" stroke="#e3e3e3" stroke-width="0.8"/>
<path d="M37.7 386.9 V298.87 Q37.7 295.37 41.2 295.37 H61.3 Q64.8 295.37 64.8 298.87 V386.9 Z" fill="#b77a9f" stroke="#8f2f60" stroke-width="0.9"/>
<text x="51.2" y="342.9" font-family="Liberation Mono" font-size="5.6" font-weight="bold" fill="#fff" text-anchor="middle" textLength="9.6" lengthAdjust="spacingAndGlyphs">$8M</text>
<path d="M73.0 386.9 V347.12 Q73.0 343.62 76.5 343.62 H96.3 Q99.8 343.62 99.8 347.12 V386.9 Z" fill="#dce3eb" stroke="#c6d1dc" stroke-width="0.9"/>
<text x="86.4" y="367.1" font-family="Liberation Mono" font-size="5.6" font-weight="bold" fill="#555" text-anchor="middle" textLength="9.6" lengthAdjust="spacingAndGlyphs">$4M</text>
<path d="M108.0 386.9 V361.02 Q108.0 357.52 111.5 357.52 H131.3 Q134.8 357.52 134.8 361.02 V386.9 Z" fill="#b9cfdb" stroke="#8db0c3" stroke-width="0.9"/>
<text x="121.4" y="374.0" font-family="Liberation Mono" font-size="5.6" font-weight="bold" fill="#555" text-anchor="middle" textLength="9.6" lengthAdjust="spacingAndGlyphs">$3M</text>
<path d="M143.1 386.9 V322.60 Q143.1 319.10 146.6 319.10 H166.4 Q169.9 319.10 169.9 322.60 V386.9 Z" fill="#c596b4" stroke="#a55c8b" stroke-width="0.9"/>
<text x="156.5" y="354.8" font-family="Liberation Mono" font-size="5.6" font-weight="bold" fill="#fff" text-anchor="middle" textLength="9.6" lengthAdjust="spacingAndGlyphs">$6M</text>
<path d="M177.8 386.9 Q177.8 385.43 180.8 385.43 H201.6 Q204.6 385.43 204.6 386.9 Z" fill="#3b7f94" stroke="#2a6a80" stroke-width="0.9"/>
<text x="191.2" y="384.2" font-family="Liberation Mono" font-size="5.4" fill="#777" text-anchor="middle" textLength="14.0" lengthAdjust="spacingAndGlyphs">$103k</text>
<path d="M212.6 386.9 V381.81 Q212.6 378.31 216.1 378.31 H236.3 Q239.8 378.31 239.8 381.81 V386.9 Z" fill="#3d8599" stroke="#2c6f84" stroke-width="0.9"/>
<text x="226.2" y="383.8" font-family="Liberation Mono" font-size="5.6" font-weight="bold" fill="#fff" text-anchor="middle" textLength="15.0" lengthAdjust="spacingAndGlyphs">$711k</text>
<path d="M247.6 386.9 V350.28 Q247.6 346.78 251.1 346.78 H271.3 Q274.8 346.78 274.8 350.28 V386.9 Z" fill="#dce3eb" stroke="#c6d1dc" stroke-width="0.9"/>
<text x="261.2" y="368.6" font-family="Liberation Mono" font-size="5.6" font-weight="bold" fill="#555" text-anchor="middle" textLength="9.6" lengthAdjust="spacingAndGlyphs">$3M</text>
<path d="M282.4 386.9 Q282.4 384.64 285.4 384.64 H307.0 Q310.0 384.64 310.0 386.9 Z" fill="#3b7f94" stroke="#2a6a80" stroke-width="0.9"/>
<text x="296.2" y="383.4" font-family="Liberation Mono" font-size="5.4" fill="#777" text-anchor="middle" textLength="14.0" lengthAdjust="spacingAndGlyphs">$145k</text>
<line x1="33.5" y1="273.9" x2="314" y2="273.9" stroke="#dcdcdc" stroke-width="0.7" stroke-dasharray="1 1.2" stroke-opacity="0.7"/>
<line x1="33.5" y1="319.1" x2="314" y2="319.1" stroke="#dcdcdc" stroke-width="0.7" stroke-dasharray="1 1.2" stroke-opacity="0.7"/>
<line x1="33.5" y1="364.3" x2="314" y2="364.3" stroke="#dcdcdc" stroke-width="0.7" stroke-dasharray="1 1.2" stroke-opacity="0.7"/>
<text x="38.8" y="396.5" font-family="Liberation Sans" font-size="6.5" letter-spacing="-0.12" fill="url(#fg0)" clip-path="url(#xl0)">Big TV (Screen)</text>
<text x="71.2" y="396.5" font-family="Liberation Sans" font-size="6.5" letter-spacing="-0.12" fill="url(#fg1)" clip-path="url(#xl1)">Home Theater</text>
<text x="108.0" y="396.5" font-family="Liberation Sans" font-size="6.5" letter-spacing="-0.12" fill="#5a5a5a" clip-path="url(#xl2)">Projectors</text>
<text x="143.5" y="396.5" font-family="Liberation Sans" font-size="6.5" letter-spacing="-0.12" fill="url(#fg3)" clip-path="url(#xl3)">Bluetooth Speaker</text>
<text x="177.5" y="396.5" font-family="Liberation Sans" font-size="6.5" letter-spacing="-0.12" fill="#5a5a5a" clip-path="url(#xl4)">MP4 Player</text>
<text x="212.0" y="396.5" font-family="Liberation Sans" font-size="6.5" letter-spacing="-0.12" fill="#5a5a5a" clip-path="url(#xl5)">MP4&amp;MP3</text>
<text x="245.6" y="396.5" font-family="Liberation Sans" font-size="6.5" letter-spacing="-0.12" fill="url(#fg6)" clip-path="url(#xl6)">LCD Monitor</text>
<text x="279.8" y="396.5" font-family="Liberation Sans" font-size="6.5" letter-spacing="-0.12" fill="url(#fg7)" clip-path="url(#xl7)">Non LCD Monitor</text>
<text x="86.3" y="408.6" font-family="Liberation Sans" font-size="6.4" letter-spacing="-0.1" fill="#5a5a5a" text-anchor="middle">TV &amp; Video</text>
<text x="191.6" y="408.6" font-family="Liberation Sans" font-size="6.4" letter-spacing="-0.1" fill="#5a5a5a" text-anchor="middle">Portable A/V</text>
<text x="279.0" y="408.6" font-family="Liberation Sans" font-size="6.4" letter-spacing="-0.1" fill="#5a5a5a" text-anchor="middle">Display Media</text>
<circle cx="323.3" cy="318.5" r="1.5" fill="#a25c86"/>
<text x="331" y="320.9" font-family="Liberation Sans" font-size="6.8" fill="#8e8e8e" textLength="28.4" lengthAdjust="spacingAndGlyphs">$7M - $8M</text>
<circle cx="323.3" cy="329.3" r="1.5" fill="#b888a8"/>
<text x="331" y="331.7" font-family="Liberation Sans" font-size="6.8" fill="#8e8e8e" textLength="31.8" lengthAdjust="spacingAndGlyphs">$5M - &lt;$7M</text>
<circle cx="323.3" cy="340.4" r="1.5" fill="#dde4ea"/>
<text x="331" y="342.79999999999995" font-family="Liberation Sans" font-size="6.8" fill="#8e8e8e" textLength="31.8" lengthAdjust="spacingAndGlyphs">$3M - &lt;$5M</text>
<circle cx="323.3" cy="351.2" r="1.5" fill="#a6c6d4"/>
<text x="331" y="353.59999999999997" font-family="Liberation Sans" font-size="6.8" fill="#8e8e8e" textLength="31.8" lengthAdjust="spacingAndGlyphs">$2M - &lt;$3M</text>
<circle cx="323.3" cy="361.7" r="1.5" fill="#427d90"/>
<text x="331" y="364.09999999999997" font-family="Liberation Sans" font-size="6.8" fill="#8e8e8e" textLength="37" lengthAdjust="spacingAndGlyphs">$103k - &lt;$2M</text><!--/P4--></svg>
<div class="a panel" style="left:376.5px;top:244.5px;width:369.5px;height:173.5px;background:#f3ebe6"><div class="a ptitle" style="top:4.2px;left:4.5px">Combo: Top 3 products in top 3 categories</div></div>
<svg class="a" style="left:377px;top:245px" width="369" height="173" viewBox="377 245 369 173"><!--P5--><circle cx="512.7" cy="276.8" r="1.9" fill="#92c5ef"/>
<text x="520.2" y="279.2" font-family="Liberation Sans" font-size="6.6" fill="#8f8f8f" textLength="13.4" lengthAdjust="spacingAndGlyphs">Sales</text>
<circle cx="538.6" cy="276.8" r="1.9" fill="#4f86c6"/>
<text x="546.1" y="279.2" font-family="Liberation Sans" font-size="6.6" fill="#8f8f8f" textLength="14" lengthAdjust="spacingAndGlyphs">Profit</text>
<circle cx="565.0" cy="276.8" r="1.9" fill="#ef8c4c"/>
<text x="572.4" y="279.2" font-family="Liberation Sans" font-size="6.6" fill="#8f8f8f" textLength="44.8" lengthAdjust="spacingAndGlyphs">Cumulative Profit</text>
<text x="402" y="298.7" font-family="Liberation Mono" font-size="7.4" fill="#828282" text-anchor="end" textLength="15.6" lengthAdjust="spacingAndGlyphs">$15M</text>
<line x1="403" y1="296.2" x2="406.4" y2="296.2" stroke="#cfcfe8" stroke-width="0.7"/>
<text x="402" y="333.3" font-family="Liberation Mono" font-size="7.4" fill="#828282" text-anchor="end" textLength="15.6" lengthAdjust="spacingAndGlyphs">$10M</text>
<line x1="403" y1="330.8" x2="406.4" y2="330.8" stroke="#cfcfe8" stroke-width="0.7"/>
<text x="402" y="367.9" font-family="Liberation Mono" font-size="7.4" fill="#828282" text-anchor="end" textLength="11.7" lengthAdjust="spacingAndGlyphs">$5M</text>
<line x1="403" y1="365.4" x2="406.4" y2="365.4" stroke="#cfcfe8" stroke-width="0.7"/>
<text x="402" y="402.5" font-family="Liberation Mono" font-size="7.4" fill="#828282" text-anchor="end" textLength="7.8" lengthAdjust="spacingAndGlyphs">$0</text>
<line x1="403" y1="400.0" x2="406.4" y2="400.0" stroke="#cfcfe8" stroke-width="0.7"/>
<line x1="406.4" y1="296" x2="406.4" y2="400.0" stroke="#8f94dc" stroke-width="0.9"/>
<line x1="719.5" y1="296" x2="719.5" y2="400.0" stroke="#ef7d5e" stroke-width="0.9"/>
<text x="725" y="298.5" font-family="Liberation Mono" font-size="7.4" fill="#828282" textLength="11.7" lengthAdjust="spacingAndGlyphs">20M</text>
<text x="725" y="350.5" font-family="Liberation Mono" font-size="7.4" fill="#828282" textLength="11.7" lengthAdjust="spacingAndGlyphs">10M</text>
<text x="725" y="402.5" font-family="Liberation Mono" font-size="7.4" fill="#828282" textLength="3.9" lengthAdjust="spacingAndGlyphs">0</text>
<line x1="406.4" y1="400.3" x2="719.5" y2="400.3" stroke="#dcd6d2" stroke-width="0.7"/>
<line x1="484.7" y1="400.0" x2="484.7" y2="402.0" stroke="#cfc9c5" stroke-width="0.7"/>
<line x1="563.0" y1="400.0" x2="563.0" y2="402.0" stroke="#cfc9c5" stroke-width="0.7"/>
<line x1="641.3" y1="400.0" x2="641.3" y2="402.0" stroke="#cfc9c5" stroke-width="0.7"/>
<path d="M416.0 400.0 V360.60 Q416.0 356.40 420.2 356.40 H440.3 Q444.5 356.40 444.5 360.60 V400.0 Z" fill="#9ecbf0" stroke="#6db0ea" stroke-width="1.1"/>
<path d="M447.0 400.0 V379.29 Q447.0 375.09 451.2 375.09 H471.8 Q476.0 375.09 476.0 379.29 V400.0 Z" fill="#6ea2dc" stroke="#3272c2" stroke-width="1.1"/>
<text x="430.3" y="380.4" font-family="Liberation Mono" font-size="5.6" fill="#555" text-anchor="middle" textLength="9.0" lengthAdjust="spacingAndGlyphs">$6M</text>
<path d="M494.4 400.0 V355.07 Q494.4 350.87 498.59999999999997 350.87 H518.6999999999999 Q522.9 350.87 522.9 355.07 V400.0 Z" fill="#9ecbf0" stroke="#6db0ea" stroke-width="1.1"/>
<path d="M525.4 400.0 V376.52 Q525.4 372.32 529.6 372.32 H550.1999999999999 Q554.4 372.32 554.4 376.52 V400.0 Z" fill="#6ea2dc" stroke="#3272c2" stroke-width="1.1"/>
<text x="508.7" y="377.6" font-family="Liberation Mono" font-size="5.6" fill="#555" text-anchor="middle" textLength="9.0" lengthAdjust="spacingAndGlyphs">$7M</text>
<path d="M572.7 400.0 V345.03 Q572.7 340.83 576.9000000000001 340.83 H597.0 Q601.2 340.83 601.2 345.03 V400.0 Z" fill="#9ecbf0" stroke="#6db0ea" stroke-width="1.1"/>
<path d="M603.7 400.0 V371.33 Q603.7 367.13 607.9000000000001 367.13 H628.5 Q632.7 367.13 632.7 371.33 V400.0 Z" fill="#6ea2dc" stroke="#3272c2" stroke-width="1.1"/>
<text x="587.0" y="372.6" font-family="Liberation Mono" font-size="5.6" fill="#555" text-anchor="middle" textLength="9.0" lengthAdjust="spacingAndGlyphs">$8M</text>
<path d="M650.9 400.0 V330.16 Q650.9 325.96 655.1 325.96 H675.1999999999999 Q679.4 325.96 679.4 330.16 V400.0 Z" fill="#9ecbf0" stroke="#6db0ea" stroke-width="1.1"/>
<path d="M681.9 400.0 V362.68 Q681.9 358.48 686.1 358.48 H706.6999999999999 Q710.9 358.48 710.9 362.68 V400.0 Z" fill="#6ea2dc" stroke="#3272c2" stroke-width="1.1"/>
<text x="665.2" y="365.2" font-family="Liberation Mono" font-size="5.6" fill="#555" text-anchor="middle" textLength="12.0" lengthAdjust="spacingAndGlyphs">$11M</text>
<line x1="406.4" y1="296.2" x2="719.5" y2="296.2" stroke="#a6aae0" stroke-width="0.8" stroke-dasharray="1 1.2"/>
<line x1="406.4" y1="365.4" x2="719.5" y2="365.4" stroke="#a6aae0" stroke-width="0.8" stroke-dasharray="1 1.2"/>
<text x="445.9" y="409.5" font-family="Liberation Mono" font-size="7.2" fill="#828282" text-anchor="middle" textLength="14.5" lengthAdjust="spacingAndGlyphs">2016</text>
<text x="524.3" y="409.5" font-family="Liberation Mono" font-size="7.2" fill="#828282" text-anchor="middle" textLength="14.5" lengthAdjust="spacingAndGlyphs">2017</text>
<text x="602.6" y="409.5" font-family="Liberation Mono" font-size="7.2" fill="#828282" text-anchor="middle" textLength="14.5" lengthAdjust="spacingAndGlyphs">2018</text>
<text x="680.8" y="409.5" font-family="Liberation Mono" font-size="7.2" fill="#828282" text-anchor="middle" textLength="14.5" lengthAdjust="spacingAndGlyphs">2019</text>
<path d="M445.9 381.7 C458.9 378.4 497.8 368.9 523.9 361.6 C550.0 354.3 576.1 347.2 602.2 338.0 C628.3 328.8 667.3 311.8 680.3 306.6" fill="none" stroke="#e8883c" stroke-width="1.2"/><!--/P5--></svg>
</body></html>
